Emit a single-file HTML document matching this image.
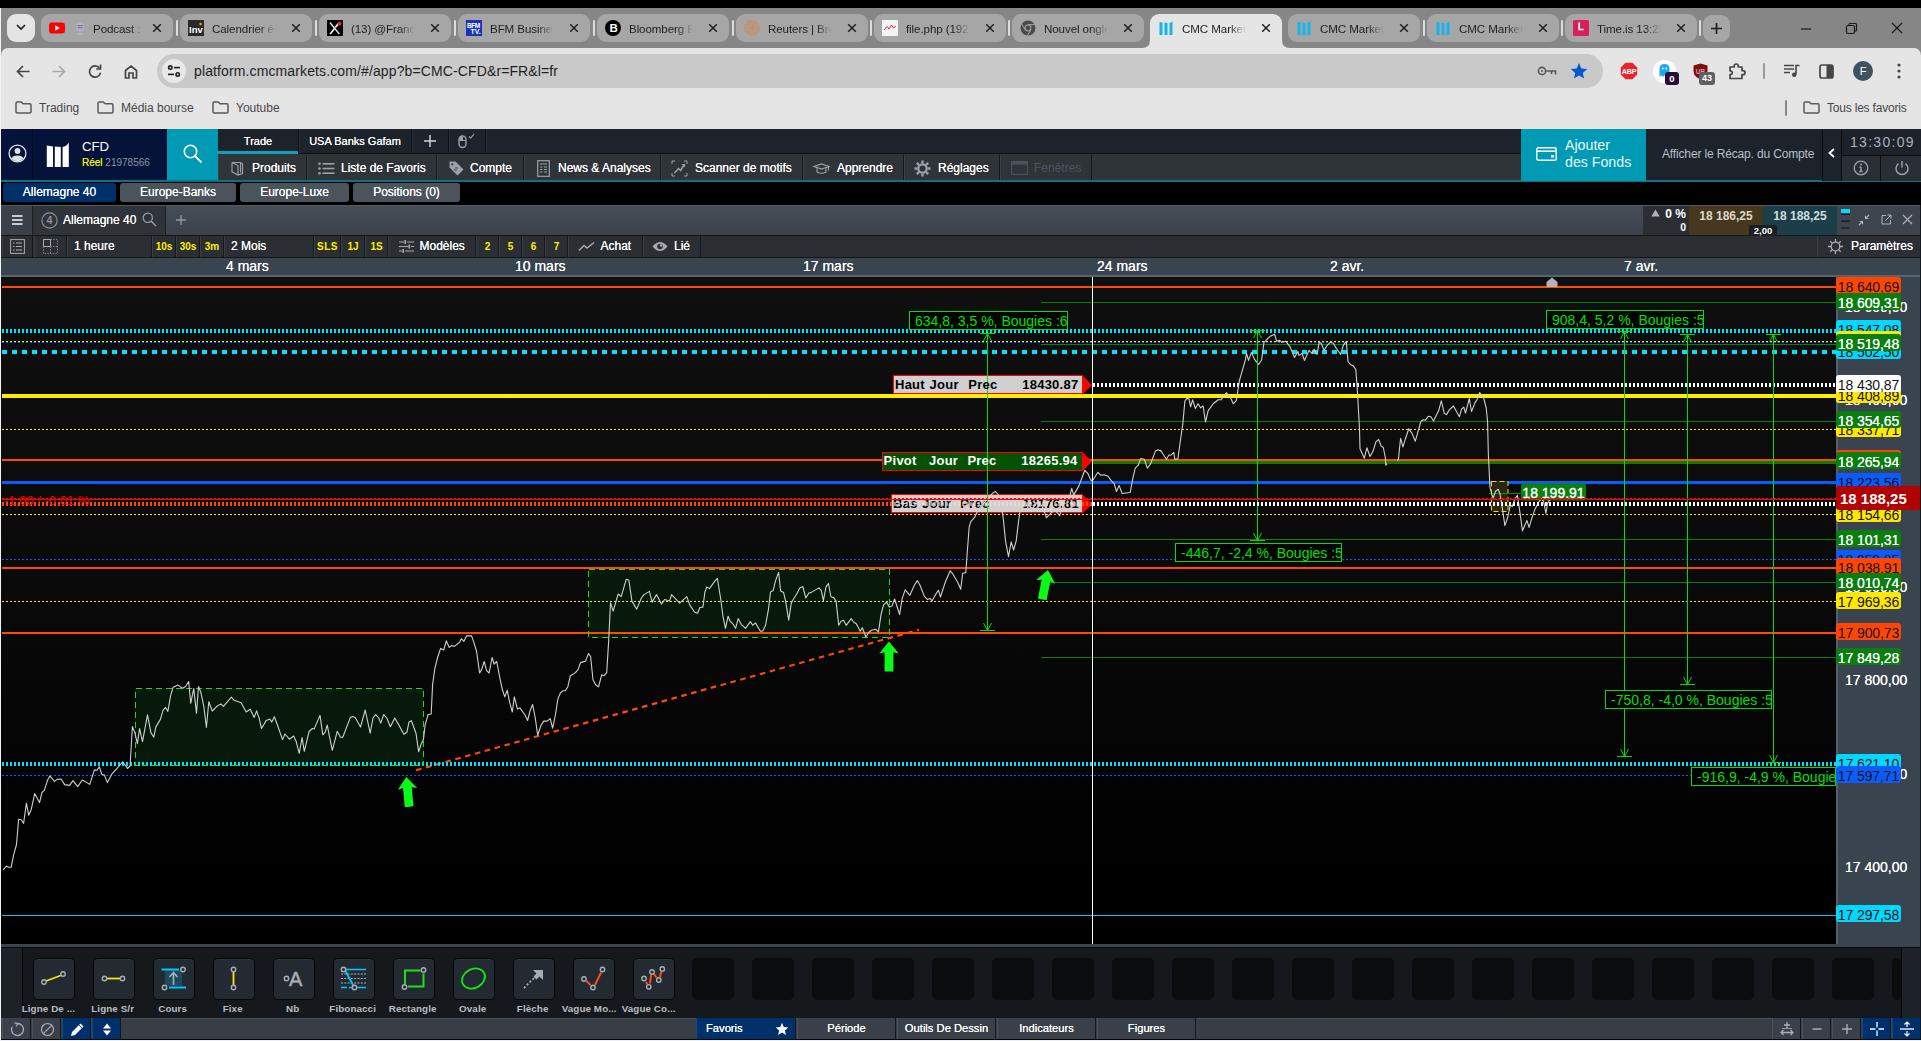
<!DOCTYPE html>
<html><head><meta charset="utf-8">
<style>
*{box-sizing:border-box;margin:0;padding:0}
html,body{width:1921px;height:1041px;overflow:hidden;background:#000;font-family:"Liberation Sans",sans-serif;}
.a{position:absolute}
svg{position:absolute;overflow:visible}
#root{position:absolute;left:0;top:0;width:1921px;height:1041px;overflow:hidden;background:#000}
/* ===== browser chrome ===== */
#strip{left:0;top:8px;width:1921px;height:46px;background:#868686}
.tab{position:absolute;top:14px;height:28px;width:132px;border-radius:9px;background:#a6a6a6;font-size:12px;color:#1f1f1f;white-space:nowrap;overflow:hidden}
.tab.act{background:#e5e5e5;height:34px;border-radius:9px 9px 0 0;overflow:visible}
.tab .t{position:absolute;left:33px;top:8px;font-size:11.6px;letter-spacing:-.1px;width:62px;overflow:hidden;-webkit-mask-image:linear-gradient(90deg,#000 75%,transparent 100%)}
.tab .x{position:absolute;left:110.5px;top:9px;width:10px;height:10px}
.tab .ic{position:absolute;left:8px;top:6px;width:16px;height:16px}
.tsep{position:absolute;top:20px;width:2px;height:16px;background:#dcdcdc;border-radius:1px}
#toolbar{left:1px;top:48px;width:1920px;height:81px;background:#e5e5e5;border-radius:7px 7px 0 0}
#pill{left:157px;top:54px;width:1446px;height:34px;border-radius:17px;background:#c9c9c9}
.bm{position:absolute;top:101px;font-size:12px;color:#474747;white-space:nowrap}
.fold{position:absolute;top:101px;width:17px;height:13px}
/* ===== app ===== */
.w{color:#fff}
.mi{position:absolute;top:155px;height:25px;background:#2f3439;border-right:1px solid #14181c;border-left:1px solid #3b4148;color:#fff;font-size:12px;line-height:26px;white-space:nowrap;text-shadow:0 0 .4px #fff}
.st{position:absolute;top:183px;height:19px;border-radius:3px;background:#4b535c;color:#fff;font-size:12px;line-height:18px;text-align:center;text-shadow:0 0 .3px #fff}
.tc{position:absolute;top:236px;height:21px;background:#2b2f33;border-right:1px solid #16181b;border-left:1px solid #3a3f45;color:#fff;font-size:12px;line-height:20px;white-space:nowrap;text-shadow:0 0 .3px #fff}
.tc.y{color:#ffee00;font-size:10px;line-height:21.5px;font-weight:bold;text-align:center;text-shadow:none}
.dt{position:absolute;top:258px;font-size:14px;color:#fff;line-height:17px;white-space:nowrap;text-shadow:0 0 .4px #fff}
.pl{position:absolute;left:1836px;width:65px;height:17px;overflow:hidden;border-radius:3px;font-size:14px;letter-spacing:-.1px;line-height:20px;text-align:center;color:#151515;white-space:nowrap}
.pl.g{background:#0a7f10;color:#fff;text-shadow:0 0 .5px #fff}
.pl.o{background:#ff4500}.pl.c{background:#00d8ff}.pl.yl{background:#ffe800}.pl.b{background:#0a5cff}.pl.wh{background:#fff}
.pt{position:absolute;left:1845px;font-size:14px;color:#fff;line-height:15px;white-space:nowrap;text-shadow:0 0 .5px #fff}
.ml{position:absolute;border:1px solid #00e000;color:#00e000;font-size:14px;line-height:18px;white-space:nowrap;background:rgba(0,0,0,.0);padding-left:5px;overflow:hidden}
.tb{position:absolute;top:958px;width:42px;height:42px;border-radius:5px;background:#0b0c0d}
.tb.on{background:#242a31;border:1px solid #060708;box-shadow:inset 0 1px 0 #2f363e}
.tl{position:absolute;top:1003px;width:62px;text-align:center;font-size:9.8px;font-weight:bold;color:#b9bec4;white-space:nowrap;letter-spacing:.1px}
.bt{position:absolute;top:1018px;height:21px;background:#3a4049;border-right:1px solid #15181b;border-left:1px solid #4a515a;color:#fff;font-size:11.2px;line-height:20px;text-align:center;text-shadow:0 0 .4px #fff;white-space:nowrap}
</style></head><body><div id="root">
<!-- CHROME -->
<div class="a" id="strip"></div>
<div class="a" id="toolbar"></div>
<div class="a" style="left:0;top:8px;width:1px;height:1033px;background:#f2f2f2"></div>
<div class="a" style="left:7px;top:14px;width:28px;height:28px;border-radius:9px;background:#e4e4e4"></div><svg style="left:16px;top:24px;width:10px;height:7px" viewBox="0 0 10 7"><path d="M1 1 L5 5 L9 1" stroke="#1f1f1f" stroke-width="1.7" fill="none"/></svg>
<div class="tab" style="left:41px"><svg class="ic" viewBox="0 0 16 16"><rect x="0" y="2.5" width="16" height="11" rx="3" fill="#f00"/><path d="M6.3 5.2 L10.8 8 L6.3 10.8Z" fill="#fff"/></svg><svg class="ic" style="left:35px;top:9px;width:8px;height:12px" viewBox="0 0 8 12"><rect x="0.5" y="0" width="7" height="8.5" rx="3" fill="#b8aec6"/><rect x="1.8" y="2.2" width="2" height="1" fill="#6a6078"/><rect x="4.4" y="2.2" width="2" height="1" fill="#6a6078"/><rect x="1.8" y="3.8" width="2" height="1.5" fill="#7a7088"/><rect x="4.4" y="3.8" width="2" height="1.5" fill="#7a7088"/><rect x="1" y="10" width="6" height="1.6" fill="#b8aec6"/></svg><span class="t" style="left:52px;width:50px">Podcast :</span><svg class="x" viewBox="0 0 10 10"><path d="M1.2 1.2 L8.8 8.8 M8.8 1.2 L1.2 8.8" stroke="#1f1f1f" stroke-width="1.5" fill="none"/></svg></div>
<div class="tsep" style="left:176px"></div><div class="tab" style="left:180px"><svg class="ic" viewBox="0 0 16 16"><rect width="16" height="16" fill="#2a2a2a"/><text x="1" y="12.5" font-family="Liberation Sans" font-weight="bold" font-size="9.5" fill="#fff">Inv</text><circle cx="12.6" cy="4" r="1.3" fill="#f90"/></svg><span class="t" style="left:32px;width:64px">Calendrier éc</span><svg class="x" viewBox="0 0 10 10"><path d="M1.2 1.2 L8.8 8.8 M8.8 1.2 L1.2 8.8" stroke="#1f1f1f" stroke-width="1.5" fill="none"/></svg></div>
<div class="tsep" style="left:315px"></div><div class="tab" style="left:319px"><svg class="ic" viewBox="0 0 16 16"><rect width="16" height="16" fill="#000"/><path d="M3 2.5 L12.5 14 M12.2 2.5 L3.2 14" stroke="#fff" stroke-width="1.6" fill="none"/><path d="M4.2 2.5 L13.2 14" stroke="#000" stroke-width=".6"/><circle cx="12.5" cy="3.5" r="2" fill="#f4212e"/></svg><span class="t" style="left:32px;width:64px">(13) @France</span><svg class="x" viewBox="0 0 10 10"><path d="M1.2 1.2 L8.8 8.8 M8.8 1.2 L1.2 8.8" stroke="#1f1f1f" stroke-width="1.5" fill="none"/></svg></div>
<div class="tsep" style="left:454px"></div><div class="tab" style="left:458px"><svg class="ic" viewBox="0 0 16 16"><rect width="16" height="16" fill="#1934b8"/><text x="1" y="7.5" font-family="Liberation Sans" font-weight="bold" font-size="6.5" fill="#fff" letter-spacing="-.4">BFM</text><text x="4.5" y="14" font-family="Liberation Sans" font-weight="bold" font-size="7" fill="#fff">TV.</text></svg><span class="t" style="left:32px;width:64px">BFM Busines</span><svg class="x" viewBox="0 0 10 10"><path d="M1.2 1.2 L8.8 8.8 M8.8 1.2 L1.2 8.8" stroke="#1f1f1f" stroke-width="1.5" fill="none"/></svg></div>
<div class="tsep" style="left:593px"></div><div class="tab" style="left:597px"><svg class="ic" viewBox="0 0 16 16"><circle cx="8" cy="8" r="8" fill="#000"/><text x="4.4" y="12.2" font-family="Liberation Sans" font-weight="bold" font-size="11.5" fill="#fff">B</text></svg><span class="t" style="left:32px;width:64px">Bloomberg E</span><svg class="x" viewBox="0 0 10 10"><path d="M1.2 1.2 L8.8 8.8 M8.8 1.2 L1.2 8.8" stroke="#1f1f1f" stroke-width="1.5" fill="none"/></svg></div>
<div class="tsep" style="left:732px"></div><div class="tab" style="left:736px"><svg class="ic" viewBox="0 0 16 16"><g fill="none" stroke="#e8742c" opacity=".8"><circle cx="8" cy="8" r="7.2" stroke-width="1.3" stroke-dasharray="1.3 1"/><circle cx="8" cy="8" r="5.2" stroke-width="1.3" stroke-dasharray="1.2 .9"/><circle cx="8" cy="8" r="3.2" stroke-width="1.2" stroke-dasharray="1 .8"/><circle cx="8" cy="8" r="1.3" stroke-width="1"/></g></svg><span class="t" style="left:32px;width:64px">Reuters | Bre</span><svg class="x" viewBox="0 0 10 10"><path d="M1.2 1.2 L8.8 8.8 M8.8 1.2 L1.2 8.8" stroke="#1f1f1f" stroke-width="1.5" fill="none"/></svg></div>
<div class="tsep" style="left:870px"></div><div class="tab" style="left:874px"><svg class="ic" viewBox="0 0 16 16"><rect width="16" height="16" rx="1" fill="#f4f4f4"/><path d="M2 10 L5 6.5 L7 9 L9.5 5 L11.5 8 L14 6" stroke="#e0303a" stroke-width="1" fill="none"/></svg><span class="t" style="left:32px;width:64px">file.php (192</span><svg class="x" viewBox="0 0 10 10"><path d="M1.2 1.2 L8.8 8.8 M8.8 1.2 L1.2 8.8" stroke="#1f1f1f" stroke-width="1.5" fill="none"/></svg></div>
<div class="tsep" style="left:1008px"></div><div class="tab" style="left:1012px"><svg class="ic" viewBox="0 0 16 16"><circle cx="8" cy="8" r="7.5" fill="#4a4a4a"/><circle cx="8" cy="8" r="3.4" fill="#a6a6a6"/><circle cx="8" cy="8" r="2.4" fill="#4a4a4a"/><path d="M8 4.6 H15 M5.1 9.7 L1.6 3.8 M10.9 9.7 L7.5 15.5" stroke="#a6a6a6" stroke-width="1"/></svg><span class="t" style="left:32px;width:64px">Nouvel ongle</span><svg class="x" viewBox="0 0 10 10"><path d="M1.2 1.2 L8.8 8.8 M8.8 1.2 L1.2 8.8" stroke="#1f1f1f" stroke-width="1.5" fill="none"/></svg></div>
<div class="tab act" style="left:1150px"><svg class="ic" viewBox="0 0 16 16"><path d="M1.5 2 L4.5 2.6 V15 H1.5Z M6.5 2.6 L9.5 3 V15 H6.5Z M11.5 3 Q14 2.6 14.5 1 V15 H11.5Z" fill="#13b5ea"/></svg><span class="t" style="left:32px;width:64px">CMC Markets</span><svg class="x" viewBox="0 0 10 10"><path d="M1.2 1.2 L8.8 8.8 M8.8 1.2 L1.2 8.8" stroke="#1f1f1f" stroke-width="1.5" fill="none"/></svg><svg style="left:-8px;top:26px;width:8px;height:8px" viewBox="0 0 8 8"><path d="M8 0 V8 H0 Q8 8 8 0Z" fill="#e5e5e5"/></svg><svg style="left:132px;top:26px;width:8px;height:8px" viewBox="0 0 8 8"><path d="M0 0 V8 H8 Q0 8 0 0Z" fill="#e5e5e5"/></svg></div>
<div class="tab" style="left:1288px"><svg class="ic" viewBox="0 0 16 16"><path d="M1.5 2 L4.5 2.6 V15 H1.5Z M6.5 2.6 L9.5 3 V15 H6.5Z M11.5 3 Q14 2.6 14.5 1 V15 H11.5Z" fill="#13b5ea"/></svg><span class="t" style="left:32px;width:64px">CMC Markets</span><svg class="x" viewBox="0 0 10 10"><path d="M1.2 1.2 L8.8 8.8 M8.8 1.2 L1.2 8.8" stroke="#1f1f1f" stroke-width="1.5" fill="none"/></svg></div>
<div class="tsep" style="left:1423px"></div><div class="tab" style="left:1427px"><svg class="ic" viewBox="0 0 16 16"><path d="M1.5 2 L4.5 2.6 V15 H1.5Z M6.5 2.6 L9.5 3 V15 H6.5Z M11.5 3 Q14 2.6 14.5 1 V15 H11.5Z" fill="#13b5ea"/></svg><span class="t" style="left:32px;width:64px">CMC Markets</span><svg class="x" viewBox="0 0 10 10"><path d="M1.2 1.2 L8.8 8.8 M8.8 1.2 L1.2 8.8" stroke="#1f1f1f" stroke-width="1.5" fill="none"/></svg></div>
<div class="tsep" style="left:1561px"></div><div class="tab" style="left:1565px"><svg class="ic" viewBox="0 0 16 16"><rect width="16" height="16" rx="1.5" fill="#d81f5a"/><path d="M6.2 2.5 V9.5 H10.8" stroke="#fff" stroke-width="1.7" fill="none"/></svg><span class="t" style="left:32px;width:64px">Time.is 13:29</span><svg class="x" viewBox="0 0 10 10"><path d="M1.2 1.2 L8.8 8.8 M8.8 1.2 L1.2 8.8" stroke="#1f1f1f" stroke-width="1.5" fill="none"/></svg></div>
<div class="tsep" style="left:1699px"></div><div class="a" style="left:1703px;top:15px;width:27px;height:27px;border-radius:9px;background:#a6a6a6"></div><svg style="left:1710px;top:22px;width:13px;height:13px" viewBox="0 0 13 13"><path d="M6.5 1 V12 M1 6.5 H12" stroke="#1f1f1f" stroke-width="1.7"/></svg>
<svg style="left:1800px;top:20px;width:110px;height:16px" viewBox="0 0 110 16"><path d="M1 9 H11" stroke="#1a1a1a" stroke-width="1.2"/><rect x="46.5" y="5.5" width="8" height="8" rx="1.5" fill="none" stroke="#1a1a1a" stroke-width="1.2"/><path d="M49 5.5 V4.5 Q49 3.5 50 3.5 H55.5 Q56.5 3.5 56.5 4.5 V10 Q56.5 11 55.5 11 H54.5" fill="none" stroke="#1a1a1a" stroke-width="1.2"/><path d="M92 3 L102 13 M102 3 L92 13" stroke="#1a1a1a" stroke-width="1.3"/></svg>
<div class="a" id="pill"></div><div class="a" style="left:162px;top:59px;width:24px;height:24px;border-radius:12px;background:#e8e8e8"></div>
<svg style="left:166px;top:63px;width:16px;height:16px" viewBox="0 0 16 16"><g stroke="#1f1f1f" stroke-width="1.6" fill="none"><circle cx="4.3" cy="4.6" r="1.7"/><path d="M8 4.6 H14"/><circle cx="11.7" cy="11.4" r="1.7"/><path d="M2 11.4 H8"/></g></svg>
<div class="a" style="left:194px;top:62px;font-size:14px;color:#1f1f1f;line-height:18px;letter-spacing:.12px">platform.cmcmarkets.com/#/app?b=CMC-CFD&amp;r=FR&amp;l=fr</div>
<svg style="left:15px;top:63px;width:130px;height:17px" viewBox="0 0 130 17"><g fill="none" stroke="#454746" stroke-width="1.7"><path d="M14.5 8.5 H2.5 M8 3 L2.5 8.5 L8 14"/><path d="M84.6 5.2 A5.6 5.6 0 1 0 85.6 9.6"/><path d="M85.6 1.6 V6 H81.2" stroke-width="1.6"/><path d="M110.5 15 V7.5 L116 3 L121.5 7.5 V15 H118 V10 H114 V15 Z"/></g><g fill="none" stroke="#a9a9a9" stroke-width="1.7"><path d="M37.5 8.5 H49.5 M44 3 L49.5 8.5 L44 14"/></g></svg>
<svg style="left:1537px;top:64px;width:20px;height:14px" viewBox="0 0 20 14"><g fill="none" stroke="#5a5a5a" stroke-width="1.6"><circle cx="5" cy="7" r="3.6"/><path d="M8.6 7 H18.5 V10.5 M14.5 7 V10"/></g><circle cx="5" cy="7" r="1" fill="#5a5a5a"/></svg><svg style="left:1570px;top:62px;width:18px;height:18px" viewBox="0 0 18 18"><path d="M9 1 L11.4 6.4 L17.2 7 L12.8 10.9 L14.1 16.6 L9 13.6 L3.9 16.6 L5.2 10.9 L0.8 7 L6.6 6.4Z" fill="#0b57d0"/></svg>
<svg style="left:1620px;top:62px;width:18px;height:18px" viewBox="0 0 18 18"><path d="M5.5 .8 H12.5 L17.2 5.5 V12.5 L12.5 17.2 H5.5 L.8 12.5 V5.5Z" fill="#e8242f"/><text x="9" y="12" text-anchor="middle" font-family="Liberation Sans" font-weight="bold" font-size="7.2" fill="#fff" letter-spacing="-.3">ABP</text></svg><div class="a" style="left:1653px;top:60px;width:23px;height:23px;border-radius:12px;background:#fff"></div><svg style="left:1658px;top:63px;width:13px;height:15px" viewBox="0 0 13 15"><path d="M1.5 14 V6 Q1.5 1 6.5 1 Q11.5 1 11.5 6 V14 L9.5 12.3 L8 14 L6.5 12.3 L5 14 L3.5 12.3Z" fill="#19a9f0"/><circle cx="4.8" cy="5.5" r="1" fill="#fff"/><circle cx="8.2" cy="5.5" r="1" fill="#fff"/></svg><div class="a" style="left:1665px;top:72px;width:14px;height:13px;border-radius:3px;background:#2a0a3a;color:#fff;font-size:9.5px;font-weight:bold;text-align:center;line-height:13px">0</div><svg style="left:1693px;top:63px;width:15px;height:17px" viewBox="0 0 15 17"><path d="M7.5 .5 L14.5 2.5 V8 Q14.5 13.5 7.5 16.5 Q.5 13.5 .5 8 V2.5Z" fill="#800c0c"/><text x="7.5" y="10.5" text-anchor="middle" font-family="Liberation Sans" font-weight="bold" font-size="6.5" fill="#d8a0a0">UB</text></svg><div class="a" style="left:1699px;top:72px;width:16px;height:13px;border-radius:3px;background:#5f6061;color:#fff;font-size:9px;font-weight:bold;text-align:center;line-height:13px">43</div><svg style="left:1728px;top:62px;width:18px;height:18px" viewBox="0 0 18 18"><path d="M2 5 H6.2 V4 Q6.2 2 8.2 2 Q10.2 2 10.2 4 V5 H14 V8.7 H15 Q17 8.7 17 10.7 Q17 12.7 15 12.7 H14 V16.5 H2 V12.7 Q4.3 12.5 4.3 10.8 Q4.3 9 2 8.8Z" fill="none" stroke="#454746" stroke-width="1.7" stroke-linejoin="round"/></svg><div class="a" style="left:1763px;top:63px;width:2px;height:16px;background:#9a9a9a;border-radius:1px"></div><svg style="left:1783px;top:63px;width:17px;height:16px" viewBox="0 0 17 16"><g stroke="#454746" stroke-width="1.6" fill="none"><path d="M1 2.5 H11 M1 6 H11 M1 9.5 H7"/><path d="M13 11.5 V2.5 H16.5"/></g><circle cx="11.2" cy="11.8" r="2.2" fill="#454746"/></svg><svg style="left:1819px;top:64px;width:15px;height:15px" viewBox="0 0 15 15"><rect x="1" y="1" width="13" height="13" rx="2" fill="none" stroke="#454746" stroke-width="1.7"/><rect x="7.5" y="1" width="6.5" height="13" fill="#454746"/></svg><div class="a" style="left:1853px;top:61px;width:20px;height:20px;border-radius:10px;background:#3d5360;color:#fff;font-size:11px;text-align:center;line-height:20px">F</div><svg style="left:1897px;top:63px;width:4px;height:16px" viewBox="0 0 4 16"><circle cx="2" cy="2" r="1.6" fill="#454746"/><circle cx="2" cy="8" r="1.6" fill="#454746"/><circle cx="2" cy="14" r="1.6" fill="#454746"/></svg>
<svg class="fold" style="left:15px" viewBox="0 0 17 13"><path d="M1 2.2 Q1 1 2.2 1 H6.2 L8 2.8 H14.8 Q16 2.8 16 4 V10.8 Q16 12 14.8 12 H2.2 Q1 12 1 10.8Z" fill="none" stroke="#5a5a5a" stroke-width="1.5"/></svg><div class="bm" style="left:39px">Trading</div><svg class="fold" style="left:97px" viewBox="0 0 17 13"><path d="M1 2.2 Q1 1 2.2 1 H6.2 L8 2.8 H14.8 Q16 2.8 16 4 V10.8 Q16 12 14.8 12 H2.2 Q1 12 1 10.8Z" fill="none" stroke="#5a5a5a" stroke-width="1.5"/></svg><div class="bm" style="left:121px">Média bourse</div><svg class="fold" style="left:212px" viewBox="0 0 17 13"><path d="M1 2.2 Q1 1 2.2 1 H6.2 L8 2.8 H14.8 Q16 2.8 16 4 V10.8 Q16 12 14.8 12 H2.2 Q1 12 1 10.8Z" fill="none" stroke="#5a5a5a" stroke-width="1.5"/></svg><div class="bm" style="left:236px">Youtube</div><svg class="fold" style="left:1803px" viewBox="0 0 17 13"><path d="M1 2.2 Q1 1 2.2 1 H6.2 L8 2.8 H14.8 Q16 2.8 16 4 V10.8 Q16 12 14.8 12 H2.2 Q1 12 1 10.8Z" fill="none" stroke="#5a5a5a" stroke-width="1.5"/></svg><div class="bm" style="left:1827px;letter-spacing:-.2px">Tous les favoris</div><div class="a" style="left:1785px;top:100px;width:2px;height:16px;background:#8a8a8a;border-radius:1px"></div>
<!-- APP -->
<div class="a" style="left:1px;top:129px;width:1920px;height:52px;background:#1d232a"></div><div class="a" style="left:1px;top:154px;width:1920px;height:27px;background:#2f3439"></div><div class="a" style="left:1px;top:129px;width:166px;height:52px;background:#05133a"></div><div class="a" style="left:32px;top:129px;width:1px;height:52px;background:#020a20"></div><div class="a" style="left:167px;top:129px;width:50.5px;height:52px;background:#009ab4"></div><div class="a" style="left:1px;top:180px;width:1920px;height:2px;background:#126f84"></div><svg style="left:8px;top:144px;width:19px;height:19px" viewBox="0 0 19 19"><defs><clipPath id="uc"><circle cx="9.5" cy="9.5" r="7.8"/></clipPath></defs><circle cx="9.5" cy="9.5" r="8.4" fill="none" stroke="#dfe3e8" stroke-width="1.3"/><circle cx="9.5" cy="7" r="2.9" fill="#dfe3e8"/><ellipse cx="9.5" cy="16" rx="6.6" ry="4.6" fill="#dfe3e8" clip-path="url(#uc)"/></svg><svg style="left:46px;top:141px;width:24px;height:27px" viewBox="0 0 24 27"><path d="M0.8 4.5 L7 5.6 V26 H0.8Z M8.8 5.6 L14.8 6 V26 H8.8Z M16.6 6 Q20.5 5.5 22.8 1.5 V26 H16.6Z" fill="#fff"/></svg><div class="a w" style="left:82px;top:139px;font-size:13.2px;line-height:16px">CFD</div><div class="a" style="left:82px;top:157px;font-size:10px;line-height:11px;color:#e8ee00;white-space:nowrap;text-shadow:0 0 .3px #e8ee00">Réel <span style="color:#8a94a4;text-shadow:none">21978566</span></div><svg style="left:182px;top:143px;width:22px;height:22px" viewBox="0 0 22 22"><circle cx="8.5" cy="8.5" r="6.2" fill="none" stroke="#fff" stroke-width="1.6"/><path d="M13 13 L19.5 19.5" stroke="#fff" stroke-width="1.8"/></svg><div class="a" style="left:298px;top:129px;width:1px;height:25px;background:#0c0f12"></div><div class="a" style="left:299px;top:129px;width:1px;height:25px;background:#2a3038"></div><div class="a" style="left:411px;top:129px;width:1px;height:25px;background:#0c0f12"></div><div class="a" style="left:412px;top:129px;width:1px;height:25px;background:#2a3038"></div><div class="a" style="left:448px;top:129px;width:1px;height:25px;background:#0c0f12"></div><div class="a" style="left:449px;top:129px;width:1px;height:25px;background:#2a3038"></div><div class="a" style="left:485px;top:129px;width:1px;height:25px;background:#0c0f12"></div><div class="a" style="left:486px;top:129px;width:1px;height:25px;background:#2a3038"></div><div class="a" style="left:218px;top:153px;width:1303px;height:1px;background:#0c0f12"></div><div class="a" style="left:218px;top:151px;width:80px;height:3px;background:#0f9fba"></div><div class="a w" style="left:218px;top:134px;width:80px;text-align:center;font-size:11px;line-height:14px;text-shadow:0 0 .4px #fff">Trade</div><div class="a w" style="left:299px;top:134px;width:112px;text-align:center;font-size:11px;line-height:14px;text-shadow:0 0 .4px #fff">USA Banks Gafam</div><svg style="left:423px;top:134px;width:14px;height:14px" viewBox="0 0 14 14"><path d="M7 1 V13 M1 7 H13" stroke="#cfd4da" stroke-width="1.5"/></svg><svg style="left:457px;top:133px;width:20px;height:16px" viewBox="0 0 20 16"><rect x="2" y="3" width="7" height="11.5" rx="3.5" fill="none" stroke="#9aa2ab" stroke-width="1.4"/><path d="M2.5 7.5 H8.5 M5.5 3.5 V7.5" stroke="#9aa2ab" stroke-width="1"/><path d="M2.6 4.5 Q3.5 3.4 5.2 3.4 V7.2 H2.4Z" fill="#9aa2ab"/><path d="M12 3.5 L13.6 5.2 L17 1.2" fill="none" stroke="#9aa2ab" stroke-width="1.1"/></svg><div class="mi" style="left:218px;width:89px"><div class="a" style="left:-1.5px;top:0;width:0;height:0"><svg style="left:13px;top:6px;width:13px;height:15px" viewBox="0 0 13 15"><path d="M1 1.5 H9.5 V11.5 M1 1.5 V11 L7 14 V4.5 L1 1.5 M9.5 1.5 L11.5 2.6 V12.6 L7 14" fill="none" stroke="#9aa2ab" stroke-width="1.1"/></svg></div><span class="a" style="left:33px;top:0">Produits</span></div>
<div class="mi" style="left:307px;width:130px"><div class="a" style="left:-1.5px;top:0;width:0;height:0"><svg style="left:11px;top:7px;width:17px;height:13px" viewBox="0 0 17 13"><g fill="#9aa2ab"><circle cx="1.5" cy="1.8" r="1.3"/><circle cx="1.5" cy="6.5" r="1.3"/><circle cx="1.5" cy="11.2" r="1.3"/><rect x="4.5" y="1" width="12" height="1.6"/><rect x="4.5" y="5.7" width="12" height="1.6"/><rect x="4.5" y="10.4" width="12" height="1.6"/></g></svg></div><span class="a" style="left:33px;top:0">Liste de Favoris</span></div>
<div class="mi" style="left:437px;width:87px"><div class="a" style="left:-1.5px;top:0;width:0;height:0"><svg style="left:11px;top:5px;width:17px;height:17px" viewBox="0 0 17 17"><path d="M1.5 1.5 H7.5 L15.5 9.5 L9.5 15.5 L1.5 7.5Z" fill="#9aa2ab"/><circle cx="4.3" cy="4.3" r="1.1" fill="#2f3439"/><text x="6.2" y="11" font-size="6" font-family="Liberation Sans" font-weight="bold" fill="#2f3439" transform="rotate(45 8 9)">$</text></svg></div><span class="a" style="left:32px;top:0">Compte</span></div>
<div class="mi" style="left:524px;width:137px"><div class="a" style="left:-1.5px;top:0;width:0;height:0"><svg style="left:13px;top:5px;width:13px;height:17px" viewBox="0 0 13 17"><rect x=".7" y=".7" width="11.6" height="15.6" fill="none" stroke="#9aa2ab" stroke-width="1.2"/><path d="M3 4 H10 M3 7 H5.5 M7 7 H10 M3 9.5 H5.5 M7 9.5 H10 M3 12 H5.5 M7 12 H10" stroke="#9aa2ab" stroke-width="1.2"/></svg></div><span class="a" style="left:33px;top:0">News &amp; Analyses</span></div>
<div class="mi" style="left:661px;width:142px"><div class="a" style="left:-1.5px;top:0;width:0;height:0"><svg style="left:10px;top:5px;width:17px;height:17px" viewBox="0 0 17 17"><path d="M1 4 V1 H4 M13 1 H16 V4 M16 13 V16 H13 M4 16 H1 V13" fill="none" stroke="#9aa2ab" stroke-width="1"/><path d="M3.5 13 L7.5 8.5 L9.5 10.5 L13 5" fill="none" stroke="#9aa2ab" stroke-width="1.5"/><path d="M10.5 4 H14 V7.5Z" fill="#9aa2ab"/></svg></div><span class="a" style="left:33px;top:0">Scanner de motifs</span></div>
<div class="mi" style="left:803px;width:101px"><div class="a" style="left:-1.5px;top:0;width:0;height:0"><svg style="left:10px;top:8px;width:17px;height:12px" viewBox="0 0 17 12"><path d="M1 3.5 L8.5 1 L16 3.5 L8.5 6Z M4 5.5 V9 Q8.5 11.5 13 9 V5.5" fill="none" stroke="#9aa2ab" stroke-width="1.2"/><path d="M15.5 3.8 V7.5" stroke="#9aa2ab" stroke-width="1"/></svg></div><span class="a" style="left:33px;top:0">Apprendre</span></div>
<div class="mi" style="left:904px;width:96px"><div class="a" style="left:-1.5px;top:0;width:0;height:0"><svg style="left:10px;top:5px;width:17px;height:17px" viewBox="0 0 17 17"><circle cx="8.5" cy="8.5" r="4.2" fill="none" stroke="#9aa2ab" stroke-width="2.2"/><g stroke="#9aa2ab" stroke-width="2.4"><path d="M8.5 .5 V3.5 M8.5 13.5 V16.5 M.5 8.5 H3.5 M13.5 8.5 H16.5 M2.8 2.8 L5 5 M12 12 L14.2 14.2 M14.2 2.8 L12 5 M5 12 L2.8 14.2"/></g></svg></div><span class="a" style="left:33px;top:0">Réglages</span></div>
<div class="mi" style="left:1000px;width:92px;color:#4a5560;text-shadow:none"><div class="a" style="left:-1.5px;top:0;width:0;height:0"><svg style="left:11px;top:6px;width:17px;height:14px" viewBox="0 0 17 14"><rect x=".6" y=".6" width="15.8" height="12.8" fill="none" stroke="#48525c" stroke-width="1.2"/><rect x=".6" y=".6" width="15.8" height="3" fill="#48525c"/></svg></div><span class="a" style="left:33px;top:0">Fenêtres</span></div>
<div class="a" style="left:1521px;top:129px;width:125px;height:52px;background:#009ab4"></div><svg style="left:1536px;top:147px;width:21px;height:14px" viewBox="0 0 21 14"><rect x=".8" y=".8" width="19.4" height="12.4" rx="1.5" fill="none" stroke="#fff" stroke-width="1.4"/><path d="M1 4.2 H20" stroke="#fff" stroke-width="1.6"/><rect x="15" y="8" width="3" height="2.5" fill="#fff"/></svg><div class="a w" style="left:1565px;top:137px;font-size:14.2px;line-height:17px;color:#eaf6fa">Ajouter<br>des Fonds</div><div class="a" style="left:1646px;top:129px;width:177px;height:51px;background:#1d232a"></div><div class="a" style="left:1662px;top:147px;font-size:12px;line-height:14px;color:#b8c0c9;white-space:nowrap;letter-spacing:-.15px">Afficher le Récap. du Compte</div><div class="a" style="left:1822px;top:129px;width:1px;height:52px;background:#0c0f12"></div><div class="a" style="left:1841px;top:129px;width:1px;height:52px;background:#0c0f12"></div><div class="a" style="left:1823px;top:129px;width:18px;height:52px;background:#1d232a"></div><svg style="left:1828px;top:148px;width:7px;height:10px" viewBox="0 0 7 10"><path d="M6 1 L1.5 5 L6 9" fill="none" stroke="#fff" stroke-width="1.8"/></svg><div class="a" style="left:1842px;top:129px;width:79px;height:26px;background:#1d232a"></div><div class="a" style="left:1842px;top:155px;width:79px;height:26px;background:#2a2f35;border-top:1px solid #0c0f12"></div><div class="a" style="left:1880px;top:155px;width:1px;height:26px;background:#0c0f12"></div><div class="a" style="left:1850px;top:134px;font-size:14px;line-height:16px;color:#aab2bb;letter-spacing:1.3px;white-space:nowrap">13:30:09</div><svg style="left:1853px;top:160px;width:16px;height:16px" viewBox="0 0 16 16"><circle cx="8" cy="8" r="6.8" fill="none" stroke="#9aa2ab" stroke-width="1.3"/><path d="M8 7 V11.5 M6.5 7.2 H8 M6.3 11.5 H9.7" stroke="#9aa2ab" stroke-width="1.4" fill="none"/><circle cx="8" cy="4.5" r="1" fill="#9aa2ab"/></svg><svg style="left:1894px;top:160px;width:16px;height:16px" viewBox="0 0 16 16"><path d="M4.6 3.6 A6 6 0 1 0 11.4 3.6" fill="none" stroke="#9aa2ab" stroke-width="1.4"/><path d="M8 1 V7.5" stroke="#9aa2ab" stroke-width="1.4"/></svg><div class="st" style="left:3px;width:113px;background:#00306a">Allemagne 40</div><div class="st" style="left:120px;width:116px">Europe-Banks</div><div class="st" style="left:240px;width:109px">Europe-Luxe</div><div class="st" style="left:353px;width:107px">Positions (0)</div>
<div class="a" style="left:1px;top:205px;width:1920px;height:31px;background:linear-gradient(#454d57,#3b424b);border-top:1px solid #515a64;border-bottom:1px solid #14171a"></div><div class="a" style="left:1px;top:206px;width:31px;height:29px;background:#3a4149"></div><div class="a" style="left:32px;top:206px;width:1px;height:29px;background:#1a1d21"></div><div class="a" style="left:33px;top:206px;width:132px;height:29px;background:#2e3439"></div><div class="a" style="left:165px;top:206px;width:1px;height:29px;background:#1a1d21"></div><svg style="left:12px;top:214px;width:10.5px;height:12px" viewBox="0 0 10.5 12"><path d="M0 2 H10.5 M0 6 H10.5 M0 10 H10.5" stroke="#c8cdd3" stroke-width="1.9"/></svg><svg style="left:41px;top:212px;width:17px;height:17px" viewBox="0 0 17 17"><circle cx="8.5" cy="8.5" r="7.6" fill="none" stroke="#8d959e" stroke-width="1.1"/><text x="8.5" y="12.3" text-anchor="middle" font-family="Liberation Sans" font-weight="bold" font-size="10.5" fill="#8d959e">4</text></svg><div class="a w" style="left:63px;top:213px;font-size:12px;line-height:14px;white-space:nowrap;text-shadow:0 0 .4px #fff">Allemagne 40</div><svg style="left:142px;top:212px;width:15px;height:15px" viewBox="0 0 15 15"><circle cx="5.8" cy="5.8" r="4.6" fill="none" stroke="#9aa2ab" stroke-width="1.2"/><path d="M9.2 9.2 L14 14" stroke="#9aa2ab" stroke-width="1.3"/></svg><svg style="left:176px;top:215px;width:10px;height:10px" viewBox="0 0 10 10"><path d="M5 0 V10 M0 5 H10" stroke="#8d959e" stroke-width="1.4"/></svg><div class="a" style="left:1643px;top:206px;width:46px;height:29px;background:#2b2f33"></div><div class="a" style="left:1689px;top:206px;width:74px;height:29px;background:#46371f"></div><div class="a" style="left:1763px;top:206px;width:74px;height:29px;background:#1b3e48"></div><div class="a" style="left:1837px;top:206px;width:84px;height:29px;background:#3d444d"></div><svg style="left:1651px;top:209px;width:9px;height:8px" viewBox="0 0 9 8"><path d="M4.5 .5 L8.7 7.5 H.3Z" fill="#aeb5bd"/></svg><div class="a w" style="left:1660px;top:207px;width:26px;text-align:right;font-size:12px;line-height:14px;white-space:nowrap;font-weight:bold">0 %</div><div class="a w" style="left:1660px;top:221px;width:26px;text-align:right;font-size:10.5px;line-height:12px;font-weight:bold">0</div><div class="a" style="left:1689px;top:209px;width:74px;text-align:center;font-size:12px;line-height:14px;color:#ddd6c8;font-weight:bold;white-space:nowrap">18 186,25</div><div class="a" style="left:1763px;top:209px;width:74px;text-align:center;font-size:12px;line-height:14px;color:#d3dcdc;font-weight:bold;white-space:nowrap">18 188,25</div><div class="a" style="left:1749px;top:225px;width:28px;height:11px;background:#1b1f23;border-radius:2px 2px 0 0;color:#fff;font-size:9.5px;line-height:11px;text-align:center;font-weight:bold">2,00</div><svg style="left:1840px;top:208px;width:11px;height:26px" viewBox="0 0 11 26"><rect x="1" y="1" width="9" height="4" fill="#00d8ff"/><path d="M1 6.5 H10 M1 13.2 H10 M1 20 H10" stroke="#14171a" stroke-width="1.2"/></svg><svg style="left:1858px;top:214px;width:12px;height:12px" viewBox="0 0 12 12"><g fill="none" stroke="#aeb5bd" stroke-width="1.1"><path d="M11 1 L7.5 4.5 M7.5 1.8 V4.5 H10.2 M1 11 L4.5 7.5 M4.5 10.2 V7.5 H1.8"/></g></svg><svg style="left:1881px;top:214px;width:11px;height:11px" viewBox="0 0 11 11"><path d="M5 1.5 H1 V10 H9.5 V6" fill="none" stroke="#aeb5bd" stroke-width="1"/><path d="M4.5 6.5 L10 1 M6.5 1 H10 V4.5" fill="none" stroke="#aeb5bd" stroke-width="1"/></svg><svg style="left:1902px;top:214px;width:11px;height:11px" viewBox="0 0 11 11"><path d="M1 1 L10 10 M10 1 L1 10" stroke="#aeb5bd" stroke-width="1.1"/></svg><div class="a" style="left:1px;top:236px;width:1920px;height:22px;background:#2b2f33;border-bottom:1px solid #14171a"></div><div class="tc" style="left:2px;width:31px;padding-left:0px"></div><div class="tc" style="left:34px;width:33px;padding-left:0px"></div><div class="tc" style="left:67px;width:85px;padding-left:6px">1 heure</div><div class="tc y" style="left:152px;width:24px">10s</div><div class="tc y" style="left:176px;width:24px">30s</div><div class="tc y" style="left:200px;width:24px">3m</div><div class="tc" style="left:224px;width:90px;padding-left:6px">2 Mois</div><div class="tc y" style="left:314px;width:27px;letter-spacing:.6px">SLS</div><div class="tc y" style="left:341px;width:24px">1J</div><div class="tc y" style="left:365px;width:23px">1S</div><div class="tc" style="left:388px;width:88px;padding-left:30.5px">Modèles</div><div class="tc y" style="left:476px;width:23px">2</div><div class="tc y" style="left:499px;width:23px">5</div><div class="tc y" style="left:522px;width:23px">6</div><div class="tc y" style="left:545px;width:23px">7</div><div class="tc" style="left:568px;width:75px;padding-left:31.5px">Achat</div><div class="tc" style="left:643px;width:58px;padding-left:30px">Lié</div><div class="tc" style="left:1817px;width:104px;padding-left:33px">Paramètres</div>
<svg style="left:10px;top:239px;width:15px;height:15px" viewBox="0 0 15 15"><rect x=".6" y=".6" width="13.8" height="13.8" fill="none" stroke="#a4abb3" stroke-width="1"/><path d="M3 4 H4.5 M6 4 H12 M3 7.5 H4.5 M6 7.5 H12 M3 11 H4.5 M6 11 H12" stroke="#a4abb3" stroke-width="1"/></svg><svg style="left:42px;top:238px;width:17px;height:17px" viewBox="0 0 17 17"><rect x="1.5" y="1.5" width="7" height="7" fill="none" stroke="#a4abb3" stroke-width="1"/><path d="M8.5 1.5 H15.5 V15.5 H1.5 V8.5 M8.5 8.5 V15.5 M8.5 8.5 H15.5" fill="none" stroke="#7d858e" stroke-width="1" stroke-dasharray="1.4 1.3"/></svg><svg style="left:399px;top:240px;width:15px;height:13px" viewBox="0 0 15 13"><g stroke="#a4abb3" stroke-width="1.2"><path d="M0 2 H5 M8 2 H15 M0 6.5 H9 M12 6.5 H15 M0 11 H3 M6 11 H15"/><path d="M6.2 0 V4 M10.2 4.5 V8.5 M4.2 9 V13" stroke-width="1.6"/></g></svg><svg style="left:578px;top:241px;width:17px;height:11px" viewBox="0 0 17 11"><path d="M1 9.5 L6 4.5 L9 7 L16 1.5" fill="none" stroke="#a4abb3" stroke-width="1.5"/></svg><svg style="left:652px;top:241px;width:16px;height:11px" viewBox="0 0 16 11"><path d="M.5 5.5 Q8 -3.5 15.5 5.5 Q8 14.5 .5 5.5Z" fill="#a4abb3"/><circle cx="8" cy="5.5" r="2.8" fill="#2b2f33"/><circle cx="9" cy="4.5" r="1.2" fill="#a4abb3"/></svg><svg style="left:1828px;top:239px;width:15px;height:15px" viewBox="0 0 15 15"><circle cx="7.5" cy="7.5" r="4.3" fill="none" stroke="#a4abb3" stroke-width="1.3"/><path d="M7.5 0 V3 M7.5 12 V15 M0 7.5 H3 M12 7.5 H15 M2.2 2.2 L4.3 4.3 M10.7 10.7 L12.8 12.8 M12.8 2.2 L10.7 4.3 M4.3 10.7 L2.2 12.8" stroke="#a4abb3" stroke-width="1.3"/></svg><div class="a" style="left:1px;top:258px;width:1920px;height:19px;background:#39444f;border-bottom:2px solid #566370"></div><div class="dt" style="left:226px">4 mars</div><div class="dt" style="left:515px">10 mars</div><div class="dt" style="left:803px">17 mars</div><div class="dt" style="left:1097px">24 mars</div><div class="dt" style="left:1330px">2 avr.</div><div class="dt" style="left:1624px">7 avr.</div>
<!-- CHART -->
<div class="a" style="left:1px;top:277px;width:1835px;height:667px;background:linear-gradient(#0f0f0f,#0a0a0a 45%,#000 90%)"></div><div class="a" style="left:1836px;top:277px;width:85px;height:670px;background:#3a444f;border-left:2px solid #55606c"></div><div class="a" style="left:1px;top:944px;width:1920px;height:3px;background:#3a444f"></div><div class="a" style="left:1px;top:947px;width:1920px;height:1px;background:#07080a"></div>
<svg style="left:0;top:0;width:1921px;height:1041px" viewBox="0 0 1921 1041">
<g shape-rendering="crispEdges">
<rect x="135" y="688" width="288.5" height="77" fill="#06190a"/><rect x="588" y="569.5" width="301.5" height="68" fill="#06190a"/>
<g shape-rendering="auto"><line x1="416" y1="770.2" x2="919" y2="629.8" stroke="#ff4a00" stroke-width="2.2" stroke-dasharray="5.6 4.6"/></g>
<rect x="893.5" y="375.5" width="189" height="18" fill="#d0d0d0" stroke="#f00" stroke-width="1"/>
<line x1="2" y1="287.0" x2="1836" y2="287.0" stroke="#ff4a00" stroke-width="2"/>
<line x1="1041" y1="302.5" x2="1836" y2="302.5" stroke="#0a7d0a" stroke-width="1"/>
<line x1="2" y1="331.0" x2="1836" y2="331.0" stroke="#00e0ff" stroke-width="4" stroke-dasharray="2 2" stroke-dashoffset="0"/>
<line x1="2" y1="341.5" x2="1836" y2="341.5" stroke="#ffee00" stroke-width="1" stroke-dasharray="2 2" stroke-dashoffset="0"/>
<line x1="2" y1="342.5" x2="1836" y2="342.5" stroke="#0a5cff" stroke-width="1" stroke-dasharray="2 2" stroke-dashoffset="0"/>
<line x1="1041" y1="344.5" x2="1836" y2="344.5" stroke="#0a7d0a" stroke-width="1"/>
<line x1="2" y1="352.0" x2="1836" y2="352.0" stroke="#00e0ff" stroke-width="4" stroke-dasharray="5 5" stroke-dashoffset="0"/>
<line x1="1093" y1="385.0" x2="1836" y2="385.0" stroke="#fff" stroke-width="4" stroke-dasharray="2 2" stroke-dashoffset="0"/>
<line x1="2" y1="395.75" x2="1836" y2="395.75" stroke="#ffee00" stroke-width="3.5"/>
<line x1="1041" y1="421.5" x2="1836" y2="421.5" stroke="#0a7d0a" stroke-width="1"/>
<line x1="2" y1="429.5" x2="1836" y2="429.5" stroke="#ffee00" stroke-width="1" stroke-dasharray="2 2" stroke-dashoffset="0"/>
<line x1="2" y1="460.0" x2="1836" y2="460.0" stroke="#ff4a00" stroke-width="2"/>
<line x1="1092" y1="462.5" x2="1836" y2="462.5" stroke="#0a7d0a" stroke-width="3"/>
<line x1="2" y1="482.5" x2="1836" y2="482.5" stroke="#0a5cff" stroke-width="3"/>
<line x1="1041" y1="539.5" x2="1836" y2="539.5" stroke="#0a7d0a" stroke-width="1"/>
<line x1="2" y1="559.5" x2="1836" y2="559.5" stroke="#0a5cff" stroke-width="1" stroke-dasharray="2 2" stroke-dashoffset="0"/>
<line x1="2" y1="568.0" x2="1836" y2="568.0" stroke="#ff4a00" stroke-width="2"/>
<line x1="1041" y1="582.5" x2="1836" y2="582.5" stroke="#0a7d0a" stroke-width="1"/>
<line x1="2" y1="601.5" x2="1836" y2="601.5" stroke="#ffee00" stroke-width="1" stroke-dasharray="2 2" stroke-dashoffset="0"/>
<line x1="2" y1="633.0" x2="1836" y2="633.0" stroke="#ff4a00" stroke-width="2"/>
<line x1="1041" y1="657.5" x2="1836" y2="657.5" stroke="#0a7d0a" stroke-width="1"/>
<line x1="2" y1="764.0" x2="1836" y2="764.0" stroke="#00e0ff" stroke-width="4" stroke-dasharray="2 2" stroke-dashoffset="0"/>
<line x1="2" y1="775.5" x2="1836" y2="775.5" stroke="#0a5cff" stroke-width="1" stroke-dasharray="2 2" stroke-dashoffset="0"/>
<line x1="2" y1="915.25" x2="1836" y2="915.25" stroke="#00c8f0" stroke-width="1.5"/>
<line x1="2" y1="514.5" x2="1836" y2="514.5" stroke="#ffee00" stroke-width="1" stroke-dasharray="2 2" stroke-dashoffset="0"/>
</g>
<g fill="none" stroke="#14e014" stroke-width="1" stroke-dasharray="6 4" shape-rendering="crispEdges"><rect x="135.5" y="688.5" width="288" height="76.5"/><rect x="588.5" y="569.5" width="301" height="67.5"/></g>
<rect x="1491.5" y="481.5" width="16.5" height="30" fill="#2a2610" stroke="#ffd800" stroke-width="1" stroke-dasharray="5 3"/>
<line x1="1489" y1="493.5" x2="1521" y2="493.5" stroke="#0a8a0a" stroke-width="1"/><rect x="1521" y="483.5" width="65" height="17" rx="3" fill="#0a7f10"/><text x="1553.5" y="497.5" text-anchor="middle" font-family="Liberation Sans" font-size="14" fill="#fff" stroke="#fff" stroke-width=".35">18 199,91</text>
<rect x="891.5" y="494.5" width="191" height="18" fill="#d0d0d0" stroke="#f00" stroke-width="1" shape-rendering="crispEdges"/><g font-family="Liberation Sans" font-weight="bold" font-size="13" fill="#000" letter-spacing=".25"><text x="892.9" y="508.3">Bas</text><text x="922" y="508.3">Jour</text><text x="960.2" y="508.3">Prec</text><text x="1022.7" y="508.3">18176.81</text></g>
<polyline points="3.0,869.8 6.5,866.1 8.5,867.3 11.1,867.3 13.7,854.6 16.5,844.5 18.6,819.3 21.2,819.7 23.6,823.3 26.4,803.2 28.7,815.3 31.3,809.2 34.7,793.5 39.5,802.6 42.0,792.5 44.4,790.1 47.4,780.6 49.8,775.9 54.5,781.4 57.1,779.4 61.1,779.0 64.6,784.6 69.6,785.4 73.0,780.6 77.7,786.6 82.3,780.0 89.8,784.4 94.4,769.9 96.9,770.3 99.3,766.9 101.9,774.5 104.3,774.9 107.3,782.4 112.4,773.3 117.0,768.5 122.7,761.8 127.5,768.5 130.1,765.8 131.2,746.7 132.4,726.5 134.8,732.6 137.4,743.6 139.6,728.5 142.5,741.6 147.5,714.8 150.9,732.6 153.8,737.2 155.8,727.1 160.4,719.4 163.0,710.4 165.5,707.3 167.9,711.4 170.5,696.2 173.1,687.2 178.0,685.1 182.6,688.2 185.6,686.5 188.7,681.5 190.7,703.3 193.7,688.6 196.5,713.4 198.5,686.5 200.8,692.2 203.8,706.3 206.4,727.5 208.8,701.7 212.3,711.0 216.9,706.3 220.9,703.9 223.4,706.3 231.4,697.2 234.1,700.3 241.1,702.7 246.2,712.0 250.2,709.3 254.2,717.4 256.7,710.8 258.9,717.4 261.5,728.5 266.3,720.4 269.8,719.0 271.8,722.1 274.4,716.8 278.0,726.5 282.5,739.6 284.9,734.0 289.5,739.2 293.6,736.0 296.2,741.6 299.2,753.3 302.1,737.6 304.3,751.3 309.1,731.5 312.3,728.5 314.2,728.9 320.0,715.4 322.8,734.8 325.2,732.2 327.2,725.1 332.3,750.3 337.3,731.2 340.4,737.2 342.8,737.2 350.4,717.4 352.9,716.4 355.5,718.0 360.5,727.1 365.2,710.0 370.2,733.2 373.0,718.0 375.7,714.6 378.7,718.0 380.7,723.1 383.7,714.6 386.8,718.0 390.4,726.7 394.8,718.0 398.9,725.1 403.9,734.2 406.9,732.2 409.0,722.1 411.4,720.7 416.0,733.2 418.6,751.7 421.1,744.3 423.5,739.2 425.1,725.1 428.1,714.6 431.2,714.0 432.6,684.7 434.8,668.6 437.6,657.5 440.6,648.4 443.7,650.0 446.3,640.8 449.3,647.4 451.7,645.4 454.4,646.4 459.4,642.4 461.4,638.7 463.8,641.4 466.5,635.9 471.5,635.9 473.9,642.4 476.6,651.5 479.6,673.0 481.6,669.6 484.2,661.5 486.6,670.6 489.1,673.0 492.1,657.5 494.1,664.2 496.7,661.5 499.8,677.7 502.4,689.8 504.8,696.9 507.2,690.2 509.8,702.9 512.3,712.0 514.3,696.9 517.5,709.0 519.9,707.9 525.0,715.0 527.6,720.5 530.0,711.0 532.6,704.5 535.1,717.0 537.7,735.2 541.1,725.1 543.7,721.1 547.2,721.1 550.2,718.6 552.6,728.1 555.2,716.0 557.9,698.9 560.3,693.2 562.7,690.8 565.3,690.8 567.8,686.8 570.4,675.7 575.4,672.6 578.0,669.6 580.5,662.6 585.5,661.1 588.5,653.5 590.6,656.5 593.0,679.7 595.6,684.7 598.6,686.8 601.7,674.7 604.1,675.7 606.7,672.6 608.7,640.4 610.5,602.7 613.1,611.2 618.2,594.0 621.2,596.6 626.2,579.3 628.9,580.3 631.9,601.1 636.7,609.1 641.4,598.0 644.0,594.6 649.4,591.4 652.1,602.1 656.5,594.6 661.5,604.1 664.6,599.5 669.6,601.1 671.6,594.6 679.7,603.1 686.8,596.6 689.8,605.1 694.8,612.2 697.5,613.2 699.9,607.5 702.9,607.1 704.9,592.0 706.9,586.9 709.4,588.6 715.0,580.9 717.4,578.5 720.7,599.0 723.1,617.2 725.5,628.3 728.1,616.2 730.1,621.2 733.2,624.3 735.6,628.3 738.2,618.6 741.2,624.3 745.7,628.3 750.3,621.6 752.7,625.3 755.4,622.9 760.4,631.3 763.0,630.9 765.5,625.3 768.5,609.1 770.5,592.0 773.1,590.6 775.5,580.9 778.6,572.4 780.6,591.0 783.6,592.6 785.6,601.1 788.7,620.2 791.3,603.1 794.1,598.0 796.7,594.0 799.8,587.9 802.8,586.5 805.8,598.0 808.8,593.0 810.9,592.6 818.9,587.9 821.3,590.6 823.4,600.7 826.0,586.9 828.4,583.5 831.0,597.0 833.5,597.4 836.1,601.1 838.7,625.3 841.1,621.2 843.5,620.2 846.2,625.3 851.2,618.6 853.8,622.3 856.3,623.7 860.3,631.3 862.3,627.7 865.9,637.0 868.8,632.3 871.4,630.3 875.4,629.3 878.5,631.7 881.1,614.2 883.5,605.1 886.5,602.1 889.5,607.1 892.0,606.1 894.6,599.0 899.6,614.5 902.2,598.4 905.2,589.9 909.9,595.4 914.3,585.3 917.3,580.6 920.0,585.3 924.4,596.4 927.4,599.4 930.0,598.4 932.1,600.8 936.5,592.9 938.5,590.3 940.5,597.0 945.6,581.2 950.2,570.8 953.0,574.2 957.7,582.3 960.7,589.3 962.7,573.2 965.8,572.6 967.2,553.0 969.2,526.8 970.8,521.7 974.4,517.7 978.9,508.6 982.9,504.6 987.5,498.5 993.0,492.9 995.4,491.5 999.0,495.5 1001.1,502.6 1003.5,520.7 1005.5,540.9 1008.5,556.6 1011.2,541.9 1013.6,550.0 1016.2,540.9 1018.6,520.7 1021.2,504.6 1023.7,500.5 1028.3,508.6 1033.3,507.6 1038.4,500.5 1043.4,508.6 1046.5,517.7 1051.5,512.6 1055.5,510.6 1059.6,515.7 1064.6,500.5 1069.7,496.5 1071.7,488.4 1073.7,494.9 1078.7,486.4 1081.8,478.3 1084.8,470.3 1087.8,473.3 1090.9,480.4 1092.9,480.0 1097.9,472.3 1100.9,475.3 1104.0,474.7 1108.0,476.3 1111.0,480.4 1114.1,483.4 1116.5,491.5 1119.1,485.4 1122.1,493.5 1130.2,492.5 1132.6,479.3 1135.2,468.2 1138.3,465.2 1140.7,458.6 1144.3,459.2 1147.4,468.2 1150.4,464.2 1155.4,451.1 1158.0,449.7 1160.5,451.1 1160.7,450.2 1163.1,454.3 1166.4,459.3 1168.8,455.3 1171.2,454.9 1173.8,452.3 1174.8,459.3 1177.9,458.9 1180.3,441.2 1182.9,423.0 1184.9,400.8 1186.9,398.4 1189.0,398.8 1190.6,406.9 1192.6,399.8 1195.4,408.5 1198.0,403.8 1200.7,407.9 1203.1,405.8 1205.5,422.0 1208.1,410.9 1213.2,403.8 1218.2,399.8 1221.2,399.8 1226.3,392.7 1230.3,397.2 1233.3,403.8 1236.4,400.4 1239.4,380.6 1245.5,359.4 1246.5,353.4 1248.5,360.4 1251.5,352.4 1254.5,359.4 1258.6,364.5 1261.6,360.0 1264.0,342.3 1266.6,339.9 1269.7,336.6 1274.7,334.2 1276.7,341.3 1279.8,340.3 1281.8,342.3 1285.8,341.3 1289.8,346.3 1294.5,357.4 1297.9,351.4 1298.9,355.4 1302.0,353.4 1304.4,360.4 1309.0,350.4 1312.0,353.4 1314.1,349.3 1317.1,354.4 1319.1,342.3 1321.1,343.3 1324.1,350.4 1327.2,345.3 1330.2,342.3 1333.2,343.3 1336.3,348.3 1340.7,354.4 1343.3,345.3 1346.3,341.3 1348.0,361.5 1350.4,364.5 1353.4,366.1 1355.8,369.5 1357.4,390.7 1359.5,429.0 1360.0,448.7 1364.3,458.2 1366.9,447.8 1370.0,456.5 1373.0,451.3 1375.9,441.8 1378.7,439.5 1381.1,446.1 1383.3,447.5 1385.1,456.5 1385.9,465.1 1387.7,463.0 1396.7,463.0 1398.4,459.1 1400.6,438.3 1402.9,446.9 1405.3,439.2 1408.8,428.8 1411.9,433.1 1415.3,441.2 1420.9,421.5 1423.1,419.8 1425.4,420.1 1428.3,416.3 1430.9,416.7 1433.5,421.0 1438.7,410.6 1441.3,400.8 1444.2,413.2 1446.5,414.6 1449.1,410.1 1453.4,406.0 1459.4,416.7 1461.7,408.9 1463.8,407.2 1465.5,413.2 1469.3,398.5 1471.5,411.5 1475.0,402.9 1477.6,398.5 1479.7,392.5 1483.6,397.7 1486.2,408.0 1487.6,421.9 1488.3,453.0 1489.3,473.8 1490.0,487.6 1491.4,492.8 1493.1,498.0 1495.7,491.0 1498.3,489.3 1500.1,494.5 1502.1,506.6 1504.9,525.6 1507.8,517.0 1510.4,504.9 1512.2,506.6 1514.8,498.8 1517.4,495.4 1519.1,506.6 1522.5,530.8 1526.9,520.4 1529.1,527.4 1531.2,520.4 1534.6,510.1 1539.0,501.4 1541.6,498.8 1543.6,501.4 1545.9,513.5 1547.6,503.1 1550.2,498.8" fill="none" stroke="#cdd1cd" stroke-width="1.1" stroke-linejoin="round"/>
<rect x="1387" y="461" width="10.5" height="3" fill="#0a7d0a" shape-rendering="crispEdges"/>
<rect x="882.5" y="452.5" width="200" height="18" fill="#045204" stroke="#f00" stroke-width="1" shape-rendering="crispEdges"/>
<path d="M1082.5 375.5 L1092 385 L1082.5 394.5Z" fill="#f00"/><path d="M1082.5 452.0 L1092 461.5 L1082.5 471.0Z" fill="#f00"/><path d="M1082.5 494.5 L1092 504 L1082.5 513.5Z" fill="#f00"/>
<line x1="987.5" y1="333" x2="987.5" y2="631" stroke="#00e000" stroke-width="1" shape-rendering="crispEdges"/><path d="M980.0 333.5 H995.0 M983.5 341 L987.5 333.5 L991.5 341 M980.0 630.5 H995.0 M983.5 623 L987.5 630.5 L991.5 623" fill="none" stroke="#00e000" stroke-width="1"/>
<line x1="1257.5" y1="330" x2="1257.5" y2="541" stroke="#00e000" stroke-width="1" shape-rendering="crispEdges"/><path d="M1250.0 330.5 H1265.0 M1253.5 338 L1257.5 330.5 L1261.5 338 M1250.0 540.5 H1265.0 M1253.5 533 L1257.5 540.5 L1261.5 533" fill="none" stroke="#00e000" stroke-width="1"/>
<line x1="1624.5" y1="331" x2="1624.5" y2="757" stroke="#00e000" stroke-width="1" shape-rendering="crispEdges"/><path d="M1617.0 331.5 H1632.0 M1620.5 339 L1624.5 331.5 L1628.5 339 M1617.0 756.5 H1632.0 M1620.5 749 L1624.5 756.5 L1628.5 749" fill="none" stroke="#00e000" stroke-width="1"/>
<line x1="1687.5" y1="334" x2="1687.5" y2="685" stroke="#00e000" stroke-width="1" shape-rendering="crispEdges"/><path d="M1680.0 334.5 H1695.0 M1683.5 342 L1687.5 334.5 L1691.5 342 M1680.0 684.5 H1695.0 M1683.5 677 L1687.5 684.5 L1691.5 677" fill="none" stroke="#00e000" stroke-width="1"/>
<line x1="1773.5" y1="334" x2="1773.5" y2="763" stroke="#00e000" stroke-width="1" shape-rendering="crispEdges"/><path d="M1766.0 334.5 H1781.0 M1769.5 342 L1773.5 334.5 L1777.5 342 M1766.0 762.5 H1781.0 M1769.5 755 L1773.5 762.5 L1777.5 755" fill="none" stroke="#00e000" stroke-width="1"/>
<g shape-rendering="crispEdges"><line x1="2" y1="504.0" x2="892" y2="504.0" stroke="#ff4a00" stroke-width="4" stroke-dasharray="2 2" stroke-dashoffset="0"/>
<line x1="1082" y1="504.0" x2="1094" y2="504.0" stroke="#ff4a00" stroke-width="4" stroke-dasharray="2 2" stroke-dashoffset="0"/>
<line x1="1093" y1="504.0" x2="1836" y2="504.0" stroke="#fff" stroke-width="4" stroke-dasharray="2 2" stroke-dashoffset="0"/>
<line x1="892" y1="504" x2="1082" y2="504" stroke="#ffd8cc" stroke-opacity=".85" stroke-width="4" stroke-dasharray="1.4 2.6" stroke-dashoffset="-2.3" shape-rendering="auto"/><line x1="2" y1="499.5" x2="1836" y2="499.5" stroke="#f00" stroke-width="1"/>
<line x1="2" y1="498.5" x2="1836" y2="498.5" stroke="#f00" stroke-width="1" stroke-dasharray="2 2" stroke-dashoffset="0"/>
</g>
<line x1="1092.5" y1="277" x2="1092.5" y2="944" stroke="#fff" stroke-width="1" shape-rendering="crispEdges"/>
<path transform="translate(406.4 776.9) rotate(-5.3)" d="M0 0 L9.7 12 L4.4 10.8 L4.4 30 L-4.4 30 L-4.4 10.8 L-9.7 12Z" fill="#0cfa18"/>
<path transform="translate(889 641.5) rotate(0)" d="M0 0 L9.7 12 L4.4 10.8 L4.4 30 L-4.4 30 L-4.4 10.8 L-9.7 12Z" fill="#0cfa18"/>
<path transform="translate(1048 570) rotate(11)" d="M0 0 L9.7 12 L4.4 10.8 L4.4 30 L-4.4 30 L-4.4 10.8 L-9.7 12Z" fill="#0cfa18"/>
<path d="M1546.5 287 V282 L1552 277.5 L1557.5 282 V287Z" fill="#b4b4b4"/>
</svg>
<div class="a" style="left:895px;top:376.5px;font-size:13px;line-height:16px;letter-spacing:.25px;color:#000;white-space:pre;font-weight:bold;">Haut</div><div class="a" style="left:929.6px;top:376.5px;font-size:13px;line-height:16px;letter-spacing:.25px;color:#000;white-space:pre;font-weight:bold;">Jour</div><div class="a" style="left:968.3px;top:376.5px;font-size:13px;line-height:16px;letter-spacing:.25px;color:#000;white-space:pre;font-weight:bold;">Prec</div><div class="a" style="left:1022.2px;top:376.5px;font-size:13px;line-height:16px;letter-spacing:.25px;color:#000;white-space:pre;font-weight:bold;">18430.87</div><div class="a" style="left:883.6px;top:453px;font-size:13px;line-height:16px;letter-spacing:.25px;color:#fff;white-space:pre;font-weight:bold;">Pivot</div><div class="a" style="left:929px;top:453px;font-size:13px;line-height:16px;letter-spacing:.25px;color:#fff;white-space:pre;font-weight:bold;">Jour</div><div class="a" style="left:967.4px;top:453px;font-size:13px;line-height:16px;letter-spacing:.25px;color:#fff;white-space:pre;font-weight:bold;">Prec</div><div class="a" style="left:1021.3px;top:453px;font-size:13px;line-height:16px;letter-spacing:.25px;color:#fff;white-space:pre;font-weight:bold;">18265.94</div>
<div class="ml" style="left:909px;top:311px;width:159px;height:19px;background:#000">634,8, 3,5 %, Bougies :6</div><div class="ml" style="left:1546px;top:310px;width:158px;height:19px;background:#000">908,4, 5,2 %, Bougies :5</div><div class="ml" style="left:1175px;top:543px;width:167px;height:19px;background:#000">-446,7, -2,4 %, Bougies :5</div><div class="ml" style="left:1605px;top:690px;width:167px;height:19px;background:#000">-750,8, -4,0 %, Bougies :5</div><div class="ml" style="left:1691px;top:767px;width:145px;height:19px;background:#000">-916,9, -4,9 %, Bougies :5</div>
<div class="a" style="left:4px;top:493px;font-size:13px;line-height:15px;color:#e80000;white-space:nowrap">-1,00 / -0,01 %</div>
<div class="pt" style="top:300px">18 600,00</div><div class="pt" style="top:393px">18 400,00</div><div class="pt" style="top:486px">18 200,00</div><div class="pt" style="top:580px">18 000,00</div><div class="pt" style="top:673px">17 800,00</div><div class="pt" style="top:767px">17 600,00</div><div class="pt" style="top:860px">17 400,00</div>
<div class="pl o" style="top:277px">18 640,69</div><div class="pl g" style="top:293px">18 609,31</div><div class="pl c" style="top:320px">18 547,08</div><div class="pl yl" style="top:331px">18 524,00</div><div class="pl c" style="top:342px">18 502,50</div><div class="pl g" style="top:334px">18 519,48</div><div class="pl yl" style="top:386px">18 408,89</div><div class="pl wh" style="top:375px">18 430,87</div><div class="pl yl" style="top:419.5px">18 337,71</div><div class="pl g" style="top:411px">18 354,65</div><div class="pl o" style="top:450px">18 268,00</div><div class="pl g" style="top:452px">18 265,94</div><div class="pl b" style="top:472.5px">18 223,56</div><div class="pl yl" style="top:504.5px">18 154,66</div><div class="pl g" style="top:529.5px">18 101,31</div><div class="pl b" style="top:549.5px">18 059,85</div><div class="pl o" style="top:558px">18 038,91</div><div class="pl g" style="top:572.5px">18 010,74</div><div class="pl yl" style="top:591.5px">17 969,36</div><div class="pl o" style="top:623px">17 900,73</div><div class="pl g" style="top:647.5px">17 849,28</div><div class="pl c" style="top:754px">17 621,10</div><div class="pl b" style="top:765.5px">17 597,71</div><div class="pl c" style="top:905px">17 297,58</div>
<div class="a" style="left:1836px;top:486px;width:85px;height:24px;border-radius:3px 0 0 3px;background:#b00000;color:#fff;font-size:15px;font-weight:bold;line-height:25px;padding-left:4px;white-space:nowrap">18 188,25</div>
<!-- BOTTOM -->
<div class="a" style="left:1px;top:948px;width:1920px;height:70px;background:#15191d"></div><div class="a" style="left:1px;top:948px;width:21px;height:70px;background:#1d2228"></div><div class="a" style="left:22px;top:948px;width:1px;height:70px;background:#050607"></div><div class="a" style="left:1901px;top:948px;width:20px;height:70px;background:#1d2228;border-left:1px solid #050607"></div>
<div class="tb on" style="left:32.7px"><svg style="left:-1px;top:-1px;width:41px;height:41px" viewBox="0 0 41 41"><path d="M13 23 L29 17" stroke="#ffe800" stroke-width="1.6"/><circle cx="11" cy="24" r="2.2" fill="#232a31" stroke="#a8aeb5" stroke-width="1.4"/><circle cx="30" cy="16" r="2.2" fill="#232a31" stroke="#a8aeb5" stroke-width="1.4"/></svg></div><div class="tl" style="left:21.700000000000003px;text-align:left">Ligne De ...</div>
<div class="tb on" style="left:92.7px"><svg style="left:-1px;top:-1px;width:41px;height:41px" viewBox="0 0 41 41"><path d="M14 20.5 H28" stroke="#ffe800" stroke-width="1.8"/><circle cx="11.5" cy="20.5" r="2.2" fill="#232a31" stroke="#a8aeb5" stroke-width="1.4"/><circle cx="29.5" cy="20.5" r="2.2" fill="#232a31" stroke="#a8aeb5" stroke-width="1.4"/></svg></div><div class="tl" style="left:81.7px">Ligne S/r</div>
<div class="tb on" style="left:152.7px"><svg style="left:-1px;top:-1px;width:41px;height:41px" viewBox="0 0 41 41"><rect x="12" y="12" width="17" height="16" fill="#1c4a5e"/><path d="M8.5 11.5 H26 M16 29.5 H33" stroke="#00c8ff" stroke-width="1.8"/><path d="M20.5 27 V15 M16.5 19 L20.5 14.5 L24.5 19" fill="none" stroke="#a8aeb5" stroke-width="1.6"/><circle cx="30" cy="11.5" r="2.2" fill="#232a31" stroke="#a8aeb5" stroke-width="1.4"/><circle cx="11.5" cy="29.5" r="2.2" fill="#232a31" stroke="#a8aeb5" stroke-width="1.4"/></svg></div><div class="tl" style="left:141.7px">Cours</div>
<div class="tb on" style="left:212.7px"><svg style="left:-1px;top:-1px;width:41px;height:41px" viewBox="0 0 41 41"><path d="M20.5 14 V27" stroke="#ffe800" stroke-width="1.8"/><circle cx="20.5" cy="11.5" r="2.2" fill="#232a31" stroke="#a8aeb5" stroke-width="1.4"/><circle cx="20.5" cy="29.5" r="2.2" fill="#232a31" stroke="#a8aeb5" stroke-width="1.4"/></svg></div><div class="tl" style="left:201.7px">Fixe</div>
<div class="tb on" style="left:272.7px"><svg style="left:-1px;top:-1px;width:41px;height:41px" viewBox="0 0 41 41"><text x="16" y="28" font-family="Liberation Sans" font-size="20" fill="#a8aeb5" stroke="#a8aeb5" stroke-width=".5">A</text><circle cx="13.5" cy="20.5" r="2.2" fill="#232a31" stroke="#a8aeb5" stroke-width="1.4"/></svg></div><div class="tl" style="left:261.7px">Nb</div>
<div class="tb on" style="left:332.7px"><svg style="left:-1px;top:-1px;width:41px;height:41px" viewBox="0 0 41 41"><path d="M11 11.5 H33 M16 29.5 H33" stroke="#00c8ff" stroke-width="1.6"/><path d="M8 16 H33 M8 20.5 H33 M8 25 H33" stroke="#a8aeb5" stroke-width="1" stroke-dasharray="2 1.3"/><path d="M8 29.5 H14" stroke="#00c8ff" stroke-width="1.6"/><path d="M12 12 L21 29" stroke="#00c8ff" stroke-width="1.8"/><circle cx="10.5" cy="11.5" r="2.2" fill="#232a31" stroke="#a8aeb5" stroke-width="1.4"/><circle cx="21.5" cy="29.5" r="2.2" fill="#232a31" stroke="#a8aeb5" stroke-width="1.4"/></svg></div><div class="tl" style="left:321.7px">Fibonacci</div>
<div class="tb on" style="left:392.7px"><svg style="left:-1px;top:-1px;width:41px;height:41px" viewBox="0 0 41 41"><path d="M12 26 V12.5 H27.5 M30.5 15.5 V28.5 H15" fill="none" stroke="#1ce01c" stroke-width="2"/><circle cx="30.5" cy="12" r="2.2" fill="#232a31" stroke="#a8aeb5" stroke-width="1.4"/><circle cx="11.5" cy="29" r="2.2" fill="#232a31" stroke="#a8aeb5" stroke-width="1.4"/></svg></div><div class="tl" style="left:381.7px">Rectangle</div>
<div class="tb on" style="left:452.7px"><svg style="left:-1px;top:-1px;width:41px;height:41px" viewBox="0 0 41 41"><ellipse cx="20.5" cy="20.5" rx="12" ry="9.5" transform="rotate(-28 20.5 20.5)" fill="none" stroke="#1ce01c" stroke-width="1.8"/></svg></div><div class="tl" style="left:441.7px">Ovale</div>
<div class="tb on" style="left:512.7px"><svg style="left:-1px;top:-1px;width:41px;height:41px" viewBox="0 0 41 41"><path d="M11 30 L24 17" stroke="#a8aeb5" stroke-width="1.8" stroke-dasharray="2 2"/><path d="M20 12 H30 V22 L26.5 18.5 L23.5 21.5 L20.5 18.5 L23.5 15.5Z" fill="#a8aeb5"/></svg></div><div class="tl" style="left:501.70000000000005px">Flèche</div>
<div class="tb on" style="left:572.7px"><svg style="left:-1px;top:-1px;width:41px;height:41px" viewBox="0 0 41 41"><path d="M13.5 23 L17.5 27 M22 27 L28 14.5" fill="none" stroke="#ff4a1c" stroke-width="2"/><circle cx="11" cy="21" r="2.2" fill="#232a31" stroke="#a8aeb5" stroke-width="1.4"/><circle cx="20" cy="29.5" r="2.2" fill="#232a31" stroke="#a8aeb5" stroke-width="1.4"/><circle cx="29.5" cy="11.5" r="2.2" fill="#232a31" stroke="#a8aeb5" stroke-width="1.4"/></svg></div><div class="tl" style="left:561.7px;text-align:left">Vague Mo...</div>
<div class="tb on" style="left:632.7px"><svg style="left:-1px;top:-1px;width:41px;height:41px" viewBox="0 0 41 41"><path d="M13 24 L14.5 26.5 M16.8 25.5 L18.2 17 M21 16 L23.5 19.5 M27 19 L28.2 14" fill="none" stroke="#ff4a1c" stroke-width="2"/><circle cx="11" cy="20.5" r="2.2" fill="#232a31" stroke="#a8aeb5" stroke-width="1.4"/><circle cx="15.8" cy="28.8" r="2.2" fill="#232a31" stroke="#a8aeb5" stroke-width="1.4"/><circle cx="19" cy="14" r="2.2" fill="#232a31" stroke="#a8aeb5" stroke-width="1.4"/><circle cx="25.8" cy="22" r="2.2" fill="#232a31" stroke="#a8aeb5" stroke-width="1.4"/><circle cx="29.3" cy="11" r="2.2" fill="#232a31" stroke="#a8aeb5" stroke-width="1.4"/></svg></div><div class="tl" style="left:621.7px;text-align:left">Vague Co...</div>
<div class="tb" style="left:692px;width:42px"></div><div class="tb" style="left:752px;width:42px"></div><div class="tb" style="left:812px;width:42px"></div><div class="tb" style="left:872px;width:42px"></div><div class="tb" style="left:932px;width:42px"></div><div class="tb" style="left:992px;width:42px"></div><div class="tb" style="left:1052px;width:42px"></div><div class="tb" style="left:1112px;width:42px"></div><div class="tb" style="left:1172px;width:42px"></div><div class="tb" style="left:1232px;width:42px"></div><div class="tb" style="left:1292px;width:42px"></div><div class="tb" style="left:1352px;width:42px"></div><div class="tb" style="left:1412px;width:42px"></div><div class="tb" style="left:1472px;width:42px"></div><div class="tb" style="left:1532px;width:42px"></div><div class="tb" style="left:1592px;width:42px"></div><div class="tb" style="left:1652px;width:42px"></div><div class="tb" style="left:1712px;width:42px"></div><div class="tb" style="left:1772px;width:42px"></div><div class="tb" style="left:1832px;width:42px"></div><div class="tb" style="left:1892px;width:9px"></div>
<div class="a" style="left:1px;top:1018px;width:1920px;height:21px;background:#383e46;border-top:1px solid #4a515a"></div><div class="a" style="left:1px;top:1039px;width:1920px;height:1px;background:#050607"></div><div class="a" style="left:0;top:1040px;width:1921px;height:1px;background:#f0f0f0"></div><div class="bt" style="left:2px;width:29px"></div><div class="bt" style="left:32px;width:29px"></div><div class="bt" style="left:62px;width:29px;background:#00306a;border-left-color:#0a4a90"></div><div class="bt" style="left:92px;width:29px;background:#00306a;border-left-color:#0a4a90"></div><svg style="left:10px;top:1022px;width:15px;height:15px" viewBox="0 0 15 15"><path d="M7.5 1.5 A6 6 0 1 1 2.2 4.7" fill="none" stroke="#a8aeb5" stroke-width="1.3"/><path d="M4.5 .8 L7.8 1.6 L6 4.4" fill="none" stroke="#a8aeb5" stroke-width="1.2"/></svg><svg style="left:40px;top:1022px;width:15px;height:15px" viewBox="0 0 15 15"><circle cx="7.5" cy="7.5" r="6" fill="none" stroke="#a8aeb5" stroke-width="1.2"/><path d="M3.3 11.7 L11.7 3.3" stroke="#a8aeb5" stroke-width="1.2"/></svg><svg style="left:70px;top:1022px;width:15px;height:15px" viewBox="0 0 15 15"><path d="M1 14 L2 10 L10.5 1.5 L13.5 4.5 L5 13Z" fill="#fff"/><path d="M9 3 L12 6" stroke="#00306a" stroke-width=".8"/></svg><svg style="left:101px;top:1022px;width:12px;height:15px" viewBox="0 0 12 15"><path d="M6 1.5 L10 6.5 H2Z M6 13.5 L10 8.5 H2Z" fill="#fff"/></svg><div class="bt" style="left:696px;width:100px;background:#00306a;border-left-color:#0a4a90"><span style="position:absolute;left:9px">Favoris</span></div><div class="bt" style="left:797px;width:99px">Période</div><div class="bt" style="left:897px;width:99px">Outils De Dessin</div><div class="bt" style="left:997px;width:99px">Indicateurs</div><div class="bt" style="left:1097px;width:99px">Figures</div><svg style="left:775px;top:1022px;width:14px;height:14px" viewBox="0 0 14 14"><path d="M7 .8 L8.8 5 L13.3 5.4 L9.9 8.4 L10.9 12.9 L7 10.5 L3.1 12.9 L4.1 8.4 L.7 5.4 L5.2 5Z" fill="#fff"/></svg><div class="bt" style="left:1772px;width:29px"></div><div class="bt" style="left:1802px;width:29px"></div><div class="bt" style="left:1832px;width:29px"></div><div class="bt" style="left:1862px;width:29px;background:#00306a;border-left-color:#0a4a90"></div><div class="bt" style="left:1892px;width:29px;background:#00306a;border-left-color:#0a4a90"></div><svg style="left:1779px;top:1021px;width:16px;height:16px" viewBox="0 0 16 16"><path d="M8 1 V7 M5 4 H11" stroke="#a8aeb5" stroke-width="1.3"/><path d="M2 11.5 H14 M4.5 9 L2 11.5 L4.5 14 M11.5 9 L14 11.5 L11.5 14" fill="none" stroke="#a8aeb5" stroke-width="1.3"/><path d="M3 7.5 H13" stroke="#a8aeb5" stroke-width=".8"/></svg><svg style="left:1811px;top:1023px;width:12px;height:12px" viewBox="0 0 12 12"><path d="M1.5 6 H10.5" stroke="#a8aeb5" stroke-width="1.5"/></svg><svg style="left:1841px;top:1023px;width:12px;height:12px" viewBox="0 0 12 12"><path d="M1 6 H11 M6 1 V11" stroke="#a8aeb5" stroke-width="1.4"/></svg><svg style="left:1870px;top:1022px;width:14px;height:14px" viewBox="0 0 14 14"><path d="M0 7 H5.5 M8.5 7 H14 M7 0 V5.5 M7 8.5 V14" stroke="#fff" stroke-width="1.3"/></svg><svg style="left:1900px;top:1021px;width:14px;height:16px" viewBox="0 0 14 16"><path d="M0 8 H14" stroke="#fff" stroke-width="1.3"/><path d="M7 1 V6 M4.5 3.5 L7 1 L9.5 3.5 M7 15 V10 M4.5 12.5 L7 15 L9.5 12.5" fill="none" stroke="#fff" stroke-width="1.2"/></svg>
<div class="a" style="left:1919.5px;top:205px;width:1.5px;height:813px;background:#15181b"></div>
</div></body></html>
